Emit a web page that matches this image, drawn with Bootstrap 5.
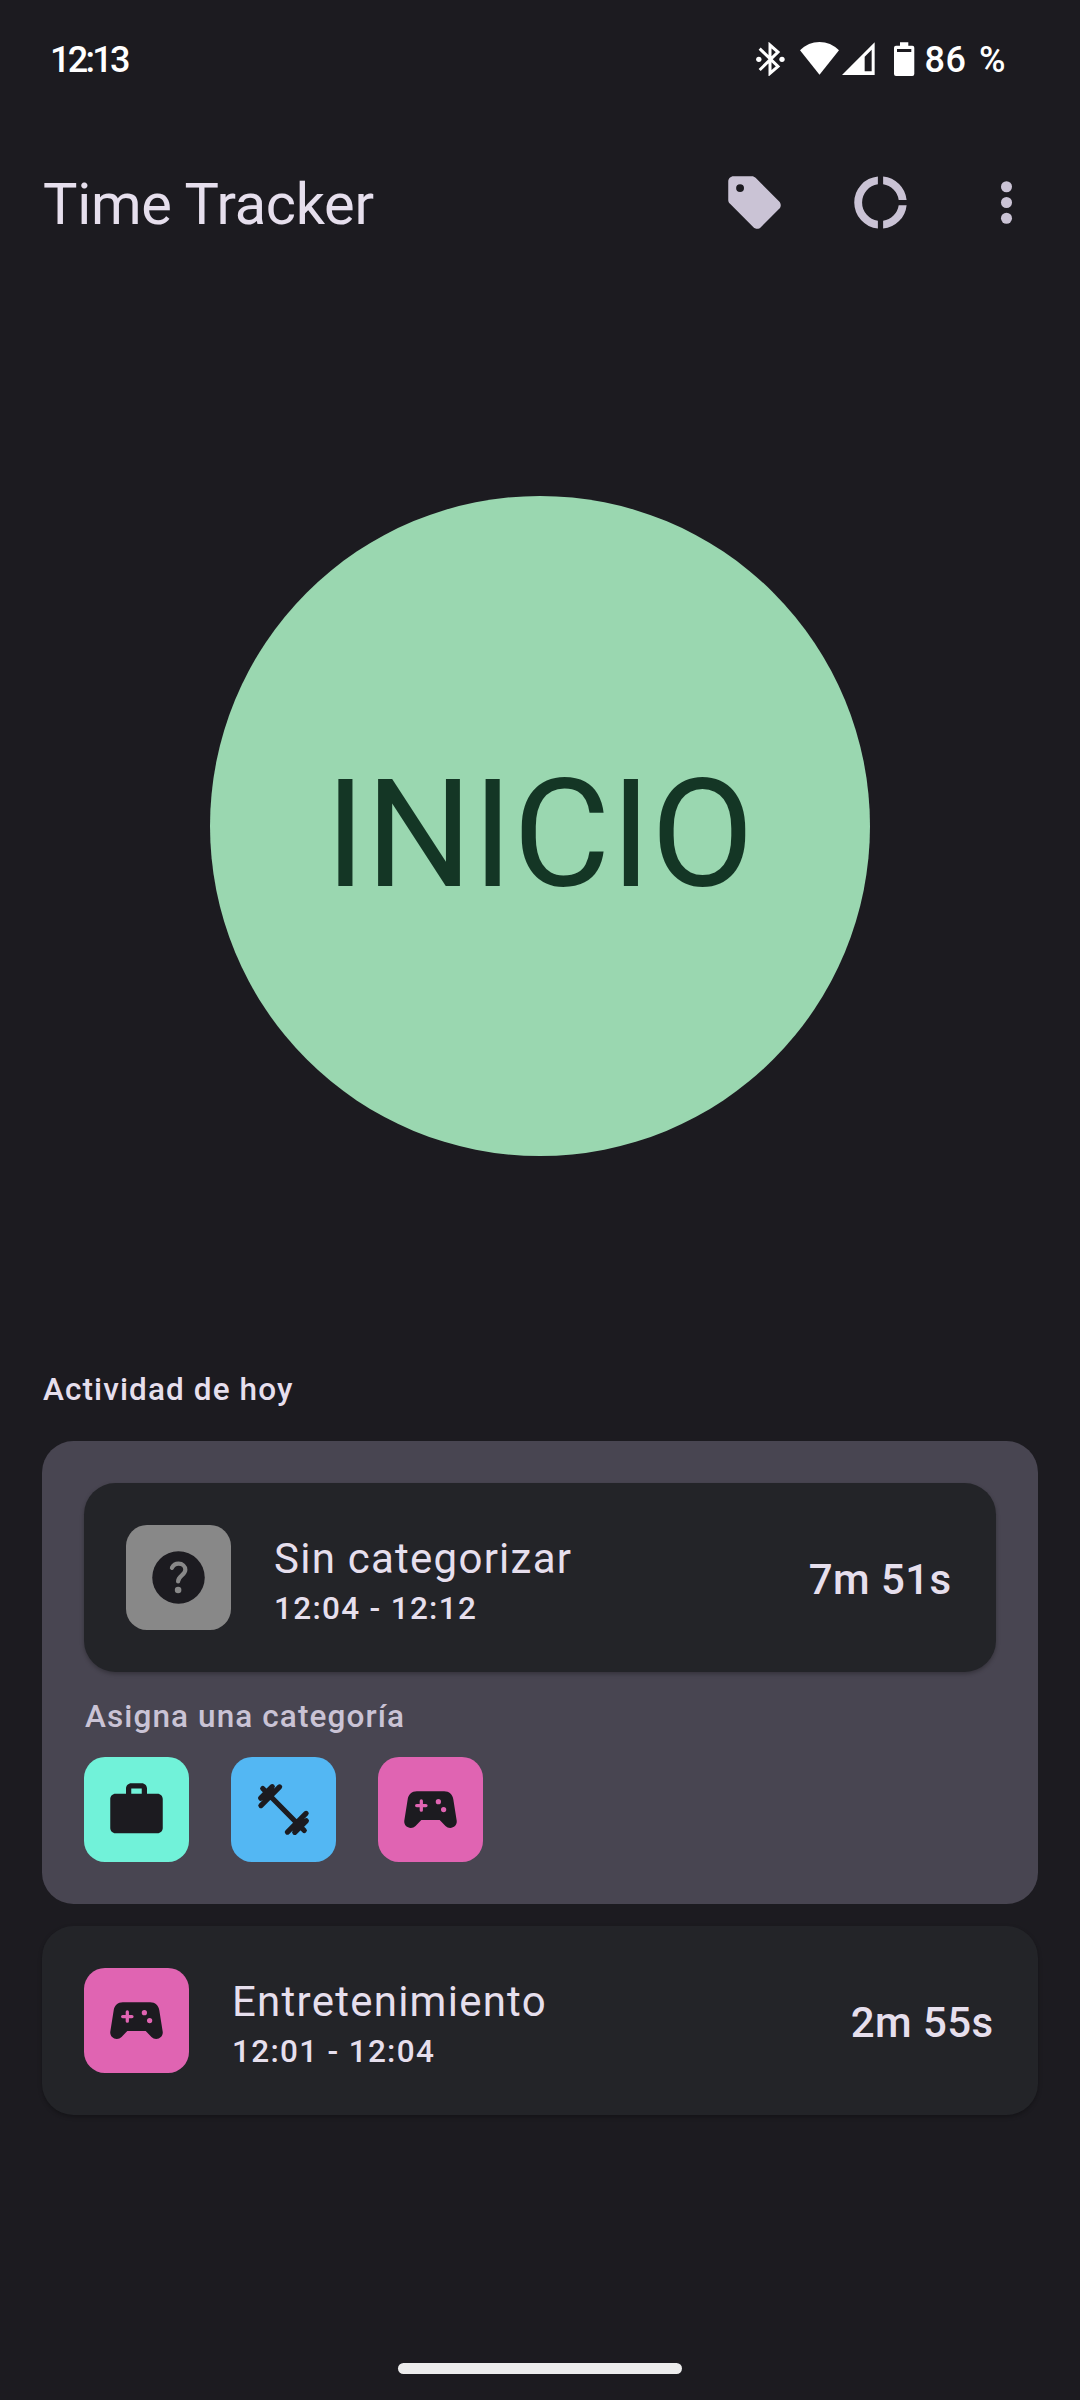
<!DOCTYPE html>
<html lang="es" data-bs-theme="dark">
<head>
<meta charset="utf-8">
<meta name="viewport" content="width=device-width, initial-scale=1">
<title>Time Tracker</title>
<link href="https://cdn.jsdelivr.net/npm/bootstrap@5.3.0/dist/css/bootstrap.min.css" rel="stylesheet">
<style>
  body { background: #1c1b20; color: #e6dfed; font-family: Roboto, "Noto Sans", sans-serif; height: 2400px; overflow: hidden; }
  .statusbar { height: 118px; padding: 0 74px 0 50px; color: #fff; font-size: 36px; font-weight: 500; line-height: 42px; }
  .statusbar svg { height: 34px; fill: #fff; }
  .clock { letter-spacing: -2.7px; padding-top: 2px; }
  .battery-level { margin-left: 10px; letter-spacing: .4px; word-spacing: 3.5px; padding-top: 2px; }
  .appbar { height: 168px; padding: 0 10.5px 0 43px; --bs-navbar-padding-y: 0; }
  .app-title { font-size: 57.75px; line-height: 74px; font-weight: 400; letter-spacing: -.3px; color: #e6dfed; padding-top: 3px; }
  .btn-tool { width: 126px; height: 126px; --bs-btn-padding-x: 0; --bs-btn-padding-y: 0; color: #cac3d5; }
  .glyph { width: 63px; height: 63px; display: block; fill: currentColor; }
  .stage { height: 1080px; }
  .btn-start { width: 660px; height: 660px; background: #9ad7b0; color: #143625; font-size: 149.6px; line-height: 168px; border: 0; padding: 17px 1px 0 0; }
  .caption { font-size: 31.5px; line-height: 42px; font-weight: 500; letter-spacing: 1.3px; color: #e6dfed; }
  .caption-words { letter-spacing: 1.1px; padding-left: 1px; }
  .today { padding: 3px 42px 0; }
  .entry, .group-card { --bs-card-border-width: 0; --bs-card-border-radius: 31.5px; --bs-card-color: #e6dfed; }
  .entry { --bs-card-bg: #232428; height: 189px; padding: 0 42px; box-shadow: 0 2px 4px rgba(0,0,0,.28); }
  .group-card { --bs-card-bg: #484551; padding: 42px; margin: 30px 0 22px; }
  .tile { width: 105px; height: 105px; border-radius: 21px; color: #1c1b20; flex: none; border: 0; padding: 0; }
  .tile-gray { background: #888; } .tile-mint { background: #71f2d9; } .tile-blue { background: #53b7f3; } .tile-pink { background: #e064b2; }
  .entry-name { font-size: 42px; line-height: 58px; letter-spacing: 1.25px; }
  .entry-text { padding-top: 4px; margin-left: 43px; }
  .duration { font-size: 42px; line-height: 63px; font-weight: 500; letter-spacing: .4px; padding: 4px 2.5px 0 0; }
  .assign { color: #cac3d5; margin: 24px 0 19px; }
  .choices { gap: 42px; }
  .homebar { width: 284px; height: 11px; background: #ececec; margin-bottom: 26px; }
</style>
</head>
<body class="d-flex flex-column">

<svg class="d-none">
  <symbol id="gamepad" viewBox="0 0 24 24">
    <path fill-rule="evenodd" d="M20.7 8.2C20.5 6.3 19.1 5 17.2 5H6.8C4.9 5 3.5 6.3 3.3 8.2L2 16.4C1.900 17.900 3.050 19 4.500 19c.7 0 1.300-.25 1.800-.75L8.500 16h7l2.200 2.250c.5.5 1.100.75 1.800.75 1.450 0 2.600-1.100 2.500-2.600zM8.500 8.100a.62.62 0 0 0-.62.62V9.880H6.720a.62.62 0 0 0 0 1.240H7.880v1.160a.62.62 0 0 0 1.240 0V11.120h1.160a.62.62 0 0 0 0-1.240H9.120V8.720a.62.62 0 0 0-.62-.62zM15 8a1 1 0 1 0 0 2 1 1 0 0 0 0-2zm2 3a1 1 0 1 0 0 2 1 1 0 0 0 0-2z"/>
  </symbol>
</svg>

<header>
  <div class="statusbar d-flex align-items-center justify-content-between">
    <span class="clock">12:13</span>
    <div class="d-flex align-items-center">
      <svg viewBox="165 66 87 102" width="29"><path d="M176 86l55 53-24 21V75l24 21-55 54" fill="none" stroke="#fff" stroke-width="9"/><circle cx="173.500" cy="118" r="8"/><circle cx="243" cy="118" r="8"/></svg>
      <svg viewBox="297 66 117 102" width="39" style="margin-left:15px"><path d="M297 91Q322 66 355.500 66T414 91L355.500 164z"/></svg>
      <svg viewBox="424 66 99 102" width="33" style="margin-left:3px"><path fill-rule="evenodd" d="M424 165L522 67V165zM492 118V154H513V89L492 110z"/></svg>
      <svg viewBox="579 66 61 102" width="20.300" style="margin-left:19px"><path fill-rule="evenodd" d="M597 67h25v10h12q6 0 6 6v79q0 6-6 6h-49q-6 0-6-6V83q0-6 6-6h12zM588 87v9h43v-9z"/></svg>
      <span class="battery-level">86 %</span>
    </div>
  </div>
  <nav class="navbar appbar flex-nowrap">
    <h1 class="app-title mb-0">Time Tracker</h1>
    <div class="d-flex">
      <button class="btn btn-tool border-0 d-flex align-items-center justify-content-center" aria-label="Etiquetas">
        <svg class="glyph" viewBox="0 0 24 24"><path fill-rule="evenodd" d="M21.410 11.580l-9-9C12.050 2.220 11.550 2 11 2H4c-1.100 0-2 .9-2 2v7c0 .55.220 1.050.590 1.420l9 9c.36.36.86.58 1.410.58.55 0 1.050-.22 1.410-.59l7-7c.37-.36.59-.86.59-1.410 0-.55-.23-1.060-.59-1.420zM6.500 8a1.500 1.500 0 1 1 0-3 1.500 1.500 0 0 1 0 3z"/></svg>
      </button>
      <button class="btn btn-tool border-0 d-flex align-items-center justify-content-center" aria-label="Estadísticas">
        <svg class="glyph" viewBox="0 0 24 24"><path d="M11 5.070V2.050a10 10 0 0 0 0 19.900V18.930a7 7 0 0 1 0-13.860zM13 2.050V5.070A7 7 0 0 1 18.930 11H21.950A10 10 0 0 0 13 2.050zM13 18.930V21.950A10 10 0 0 0 21.950 13H18.930A7 7 0 0 1 13 18.930z"/></svg>
      </button>
      <button class="btn btn-tool border-0 d-flex align-items-center justify-content-center" aria-label="Más">
        <svg class="glyph" viewBox="0 0 24 24"><circle cx="12" cy="6" r="2.100"/><circle cx="12" cy="12" r="2.100"/><circle cx="12" cy="18" r="2.100"/></svg>
      </button>
    </div>
  </nav>
</header>

<main>
  <section class="stage d-flex align-items-center justify-content-center">
    <button class="btn btn-start rounded-circle">INICIO</button>
  </section>

  <section class="today">
    <h2 class="caption caption-words mb-0">Actividad de hoy</h2>

    <div class="card group-card">
      <div class="card entry flex-row align-items-center">
        <div class="tile tile-gray d-flex align-items-center justify-content-center">
          <svg class="glyph" viewBox="0 0 24 24"><circle cx="12" cy="12" r="10"/><path d="M9.500 8.300C10 7.300 10.900 6.750 12 6.750c1.550 0 2.600 1 2.600 2.300 0 2-2.750 2.300-2.750 4.450" fill="none" stroke="#888" stroke-width="1.600" stroke-linecap="round"/><circle cx="11.850" cy="16.750" r="1.250" fill="#888"/></svg>
        </div>
        <div class="entry-text">
          <div class="entry-name">Sin categorizar</div>
          <div class="caption">12:04 - 12:12</div>
        </div>
        <div class="duration ms-auto">7m 51s</div>
      </div>
      <div class="caption caption-words assign">Asigna una categoría</div>
      <div class="choices d-flex">
        <button class="btn tile tile-mint d-flex align-items-center justify-content-center" aria-label="Trabajo">
          <svg class="glyph" viewBox="0 0 24 24"><path d="M20 6h-4V4c0-1.110-.89-2-2-2h-4c-1.110 0-2 .89-2 2v2H4c-1.110 0-2 .89-2 2v11c0 1.110.89 2 2 2h16c1.110 0 2-.89 2-2V8c0-1.110-.89-2-2-2zm-6 0h-4V4h4v2z"/></svg>
        </button>
        <button class="btn tile tile-blue d-flex align-items-center justify-content-center" aria-label="Ejercicio">
          <svg class="glyph" viewBox="0 0 24 24"><path d="M4.100 4L19.900 20M3.400 10.500L10.500 3.400M3.300 7.700L7.700 3.300M5 8.600L8.600 5M13.500 20.600L20.600 13.500M16.300 20.700L20.700 16.300M15.400 19L19 15.400" fill="none" stroke="currentColor" stroke-width="2" stroke-linecap="round"/></svg>
        </button>
        <button class="btn tile tile-pink d-flex align-items-center justify-content-center" aria-label="Entretenimiento">
          <svg class="glyph"><use href="#gamepad"/></svg>
        </button>
      </div>
    </div>

    <div class="card entry flex-row align-items-center">
      <div class="tile tile-pink d-flex align-items-center justify-content-center">
        <svg class="glyph"><use href="#gamepad"/></svg>
      </div>
      <div class="entry-text">
        <div class="entry-name">Entretenimiento</div>
        <div class="caption">12:01 - 12:04</div>
      </div>
      <div class="duration ms-auto">2m 55s</div>
    </div>
  </section>
</main>

<div class="homebar rounded-pill mt-auto mx-auto"></div>

<script src="https://cdn.jsdelivr.net/npm/bootstrap@5.3.0/dist/js/bootstrap.bundle.min.js"></script>
</body>
</html>
